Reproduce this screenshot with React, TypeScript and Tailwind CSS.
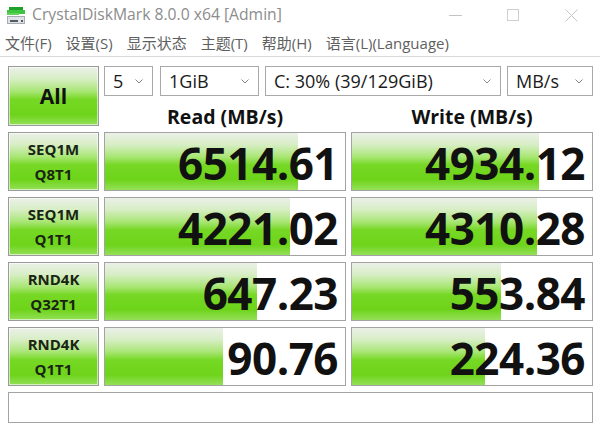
import React from 'react';

const font = { fontFamily: '"Open Sans", "Noto Sans CJK SC", sans-serif' };

type Row = { l1: string; l2: string; read: string; readBar: string; write: string; writeBar: string };

const rows: Row[] = [
  { l1: 'SEQ1M', l2: 'Q8T1', read: '6514.61', readBar: 'w-[193px]', write: '4934.12', writeBar: 'w-[187px]' },
  { l1: 'SEQ1M', l2: 'Q1T1', read: '4221.02', readBar: 'w-[185px]', write: '4310.28', writeBar: 'w-[185px]' },
  { l1: 'RND4K', l2: 'Q32T1', read: '647.23', readBar: 'w-[152px]', write: '553.84', writeBar: 'w-[149px]' },
  { l1: 'RND4K', l2: 'Q1T1', read: '90.76', readBar: 'w-[118px]', write: '224.36', writeBar: 'w-[133px]' },
];

const greenBg =
  'bg-[linear-gradient(to_bottom,#ebf0e8_0%,#d8eec6_20%,#a8e674_42%,#76d824_56%,#6ed41a_82%,#94e058_100%)]';

const Chevron = () => (
  <svg width="8" height="5" viewBox="0 0 8 5" className="shrink-0">
    <path d="M0.5 0.5 L4 4 L7.5 0.5" fill="none" stroke="#8a8a8a" strokeWidth="1" />
  </svg>
);

const Select = ({ value, className }: { value: string; className: string }) => (
  <div
    className={`h-[30px] border border-[#a9a9a9] bg-white flex items-center justify-between pl-[8px] pr-[9px] text-[18px] text-[#1a1a1a] ${className}`}
  >
    <span className="leading-tight">{value}</span>
    <Chevron />
  </div>
);

const AppIcon = () => (
  <svg width="18" height="17" viewBox="0 0 18 17">
    <rect x="2" y="0" width="14" height="3" fill="#1e9e2a" />
    <rect x="0" y="3" width="18" height="4" fill="#3cc640" />
    <rect x="0" y="6" width="12" height="2" fill="#5fd35c" />
    <rect x="0" y="9" width="18" height="8" fill="#a7acb3" />
    <rect x="1" y="10" width="16" height="6" fill="#dfe2e6" />
    <rect x="3" y="13" width="8" height="2" fill="#555b63" />
    <rect x="14" y="13" width="2" height="2" fill="#555b63" />
  </svg>
);

// bar drawn behind the number, number right aligned over it
const ValueCell = ({ value, bar }: { value: string; bar: string }) => (
  <div className="relative h-[59px] border border-[#a3a3a3] bg-white">
    <div className={`absolute left-0 top-0 bottom-0 ${bar} ${greenBg}`} />
    <div className="relative h-full flex items-center justify-end pr-[7px] pt-[3px] text-[44px] font-bold text-[#111] leading-[1.15] tracking-[-0.5px]">
      <span>{value}</span>
    </div>
  </div>
);

export default function App() {
  return (
    <div className="w-[600px] h-[426px] bg-white overflow-hidden" style={font}>
      {/* title bar */}
      <div className="h-[30px] flex items-center relative">
        <div className="pl-[7px] pr-[7px] pt-[1px]">
          <AppIcon />
        </div>
        <span className="text-[15.7px] text-[#8c8c8c] leading-tight">CrystalDiskMark 8.0.0 x64 [Admin]</span>
        <div className="ml-auto flex items-center h-full">
          <div className="w-[58px] h-full flex items-center justify-center">
            <div className="w-[13px] h-px bg-[#c4c4c4]" />
          </div>
          <div className="w-[58px] h-full flex items-center justify-center">
            <div className="w-[12px] h-[12px] border border-[#cfcfcf]" />
          </div>
          <div className="w-[58px] h-full flex items-center justify-center">
            <svg width="13" height="13" viewBox="0 0 13 13">
              <path d="M0.5 0.5 L12.5 12.5 M12.5 0.5 L0.5 12.5" stroke="#c4c4c4" strokeWidth="1" />
            </svg>
          </div>
        </div>
      </div>

      {/* menu bar */}
      <div className="h-[27px] flex items-center gap-[14px] pl-[5px] text-[15px] text-[#5f5f5f] border-b border-[#dadada]">
        <span>文件(F)</span>
        <span>设置(S)</span>
        <span>显示状态</span>
        <span>主题(T)</span>
        <span>帮助(H)</span>
        <span>语言(L)(Language)</span>
      </div>

      {/* main */}
      <div className="px-[8px] pt-[9px] grid grid-cols-[91px_242px_242px] gap-x-[5px] gap-y-[6px]">
        <button
          className={`h-[60px] border border-[#9a9a9a] ${greenBg} pt-[2px] text-[21px] font-bold text-[#111] shadow-[inset_0_0_0_1px_rgba(255,255,255,0.6)]`}
        >
          All
        </button>
        <div className="col-span-2 flex flex-col">
          <div className="flex gap-[6px]">
            <Select value="5" className="w-[49px]" />
            <Select value="1GiB" className="w-[99px] ml-[1px]" />
            <Select value="C: 30% (39/129GiB)" className="w-[236px]" />
            <Select value="MB/s" className="w-[86px]" />
          </div>
          <div className="flex-1 grid grid-cols-2 gap-x-[5px]">
            <div className="flex items-end justify-center text-[19.5px] font-bold text-[#111] leading-none">
              Read (MB/s)
            </div>
            <div className="flex items-end justify-center text-[19.5px] font-bold text-[#111] leading-none">
              Write (MB/s)
            </div>
          </div>
        </div>

        {rows.map((r, i) => (
          <React.Fragment key={i}>
            <div
              className={`h-[59px] border border-[#9a9a9a] ${greenBg} flex flex-col items-center justify-center pt-[1px] text-[15px] font-bold text-[#1a2414] leading-[25px] shadow-[inset_0_0_0_1px_rgba(255,255,255,0.6)]`}
            >
              <span>{r.l1}</span>
              <span>{r.l2}</span>
            </div>
            <ValueCell value={r.read} bar={r.readBar} />
            <ValueCell value={r.write} bar={r.writeBar} />
          </React.Fragment>
        ))}

        <div className="col-span-3 h-[31px] border border-[#a3a3a3] bg-white" />
      </div>
    </div>
  );
}
